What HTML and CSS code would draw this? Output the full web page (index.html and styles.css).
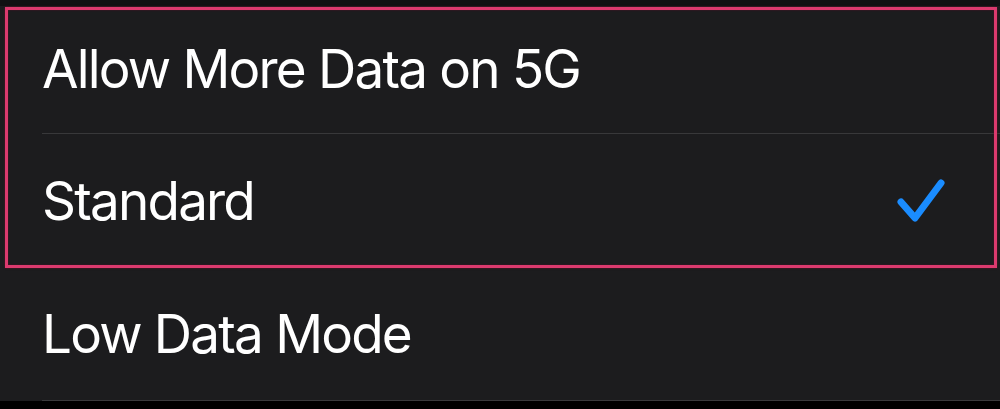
FILE: index.html
```html
<!DOCTYPE html>
<html>
<head>
    <title>Cellular Data Mode</title>
    <link rel="stylesheet" href="styles.css">
</head>
<body>
    <div class="topbar"></div>

    <div class="list">
        <div class="group highlight">
            <div class="row">
                <span class="label">Allow More Data on 5G</span>
            </div>
            <div class="row">
                <span class="label">Standard</span>
                <svg class="check" width="52" height="48" viewBox="0 0 52 48">
                    <polyline points="5,24 19,40 45,5" fill="none" stroke="#1a8cff" stroke-width="7" stroke-linecap="round" stroke-linejoin="round"/>
                </svg>
            </div>
        </div>
        <div class="row last">
            <span class="label">Low Data Mode</span>
        </div>
    </div>

    <div class="bottombar"></div>
</body>
</html>
```

FILE: styles.css
```css
body { margin: 0; background: #1c1c1e; font-family: Inter, "Noto Sans", sans-serif; color: #fff; overflow: hidden; }
.topbar { height: 6px; background: #111112; }
.list { background: #1c1c1e; }
.group { position: relative; }
.highlight::after { content: ""; position: absolute; left: 5px; right: 3px; top: 1px; bottom: 0; border: 3px solid #dc3a6e; box-shadow: 0 0 2px #5a1028, inset 0 0 2px #5a1028; pointer-events: none; }
.row { display: flex; align-items: center; justify-content: space-between; height: 133px; margin-left: 42px; padding-right: 52px; border-bottom: 1px solid #38383a; box-sizing: border-box; }
.row:first-child { height: 128px; }
.row + .row { height: 134px; border-bottom: none; }
.row.last { height: 133px; border-bottom: 1px solid #3a3a3c; }
.label { font-size: 53px; letter-spacing: -1.8px; line-height: 1; }
.check { margin-top: 2px; }
.bottombar { height: 8px; background: #000; }
```
